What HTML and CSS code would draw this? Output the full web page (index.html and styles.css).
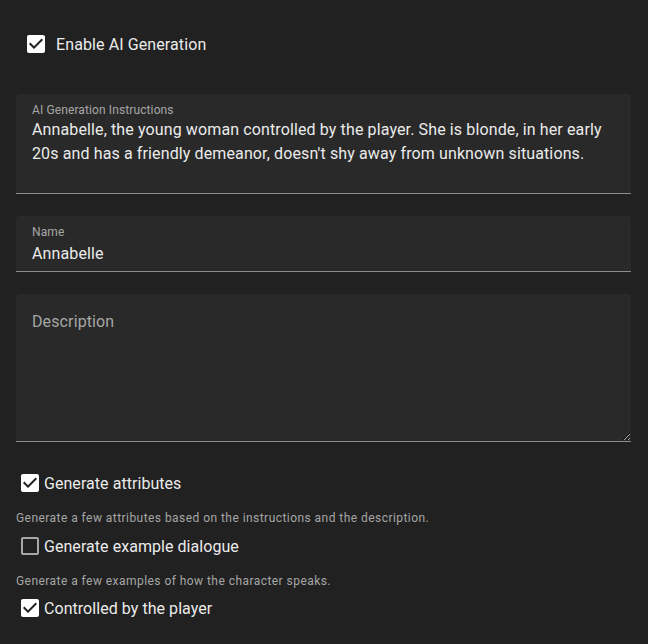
FILE: index.html
```html
<!DOCTYPE html>
<html lang="en">
<head>
<meta charset="utf-8">
<title>Character</title>
<link rel="stylesheet" href="styles.css">
</head>
<body>
<div class="page">
  <label class="toggle">
    <svg class="cb" viewBox="0 0 24 24" width="24" height="24"><path fill="#ffffff" d="M19 3H5c-1.11 0-2 .9-2 2v14c0 1.1.89 2 2 2h14c1.11 0 2-.9 2-2V5c0-1.1-.89-2-2-2zm-9 14l-5-5 1.41-1.41L10 14.17l7.59-7.59L19 8l-9 9z"/></svg>
    <span class="toggle-text">Enable AI Generation</span>
  </label>

  <div class="field field-instructions">
    <div class="field-label">AI Generation Instructions</div>
    <div class="field-value">Annabelle, the young woman controlled by the player. She is blonde, in her early 20s and has a friendly demeanor, doesn't shy away from unknown situations.</div>
  </div>

  <div class="field field-name">
    <div class="field-label">Name</div>
    <div class="field-value">Annabelle</div>
  </div>

  <textarea class="field-area" placeholder="Description"></textarea>

  <div class="options">
    <label class="option">
      <svg class="cb" viewBox="0 0 24 24" width="24" height="24"><path fill="#ffffff" d="M19 3H5c-1.11 0-2 .9-2 2v14c0 1.1.89 2 2 2h14c1.11 0 2-.9 2-2V5c0-1.1-.89-2-2-2zm-9 14l-5-5 1.41-1.41L10 14.17l7.59-7.59L19 8l-9 9z"/></svg>
      <span>Generate attributes</span>
    </label>
    <div class="hint">Generate a few attributes based on the instructions and the description.</div>
    <label class="option">
      <svg class="cb" viewBox="0 0 24 24" width="24" height="24"><path fill="#a8a8a8" d="M19 3H5c-1.11 0-2 .89-2 2v14a2 2 0 0 0 2 2h14a2 2 0 0 0 2-2V5a2 2 0 0 0-2-2m0 2v14H5V5h14z"/></svg>
      <span>Generate example dialogue</span>
    </label>
    <div class="hint hint-second">Generate a few examples of how the character speaks.</div>
    <label class="option">
      <svg class="cb" viewBox="0 0 24 24" width="24" height="24"><path fill="#ffffff" d="M19 3H5c-1.11 0-2 .9-2 2v14c0 1.1.89 2 2 2h14c1.11 0 2-.9 2-2V5c0-1.1-.89-2-2-2zm-9 14l-5-5 1.41-1.41L10 14.17l7.59-7.59L19 8l-9 9z"/></svg>
      <span>Controlled by the player</span>
    </label>
  </div>
</div>
</body>
</html>
```
FILE: styles.css
```css
html, body {
  margin: 0;
  padding: 0;
  background: #212121;
  color-scheme: dark;
}
body {
  font-family: Roboto, "Noto Sans", sans-serif;
  color: #ebebeb;
  -webkit-font-smoothing: antialiased;
}
.page {
  padding: 32px 17px 0 16px;
  display: flex;
  flex-direction: column;
}
.toggle {
  display: flex;
  align-items: center;
  padding-left: 8px;
  height: 24px;
  gap: 8px;
  font-size: 16px;
  letter-spacing: 0.1px;
}
.cb {
  display: block;
  flex: none;
}
.field {
  background: #292929;
  border-radius: 4px 4px 0 0;
  border-bottom: 1px solid #8c8c8c;
  padding: 10px 16px 0 16px;
  box-sizing: border-box;
}
.field-label {
  font-size: 12px;
  line-height: 12px;
  color: #a6a6a6;
  letter-spacing: 0.009375em;
}
.field-value {
  font-size: 16px;
  line-height: 24px;
  letter-spacing: 0.0075em;
  color: #ebebeb;
}
.field-instructions {
  margin-top: 38px;
  height: 100px;
}
.field-instructions .field-value {
  margin-top: 2px;
}
.field-name {
  margin-top: 22px;
  height: 56px;
}
.field-name .field-value {
  margin-top: 4px;
}
.field-area {
  margin: 22px 0 0 0;
  display: block;
  width: 100%;
  height: 148px;
  box-sizing: border-box;
  background: #292929;
  border: none;
  border-bottom: 1px solid #8c8c8c;
  border-radius: 4px 4px 0 0;
  padding: 16px 16px 0 16px;
  font-family: Roboto, "Noto Sans", sans-serif;
  font-size: 16px;
  line-height: 24px;
  letter-spacing: 0.0075em;
  color: #ebebeb;
  resize: vertical;
  outline: none;
}
.field-area::placeholder {
  color: #a6a6a6;
  opacity: 1;
}
.options {
  display: flex;
  flex-direction: column;
  margin-top: 29px;
}
.option {
  display: flex;
  align-items: center;
  height: 24px;
  padding-left: 2px;
  gap: 2px;
  font-size: 16px;
  letter-spacing: 0.05px;
}
.hint {
  font-size: 12px;
  line-height: 16px;
  letter-spacing: 0.45px;
  color: #a6a6a6;
  margin: 15px 0 8px 0;
}
.hint-second {
  margin: 15px 0 7px 0;
}
```
